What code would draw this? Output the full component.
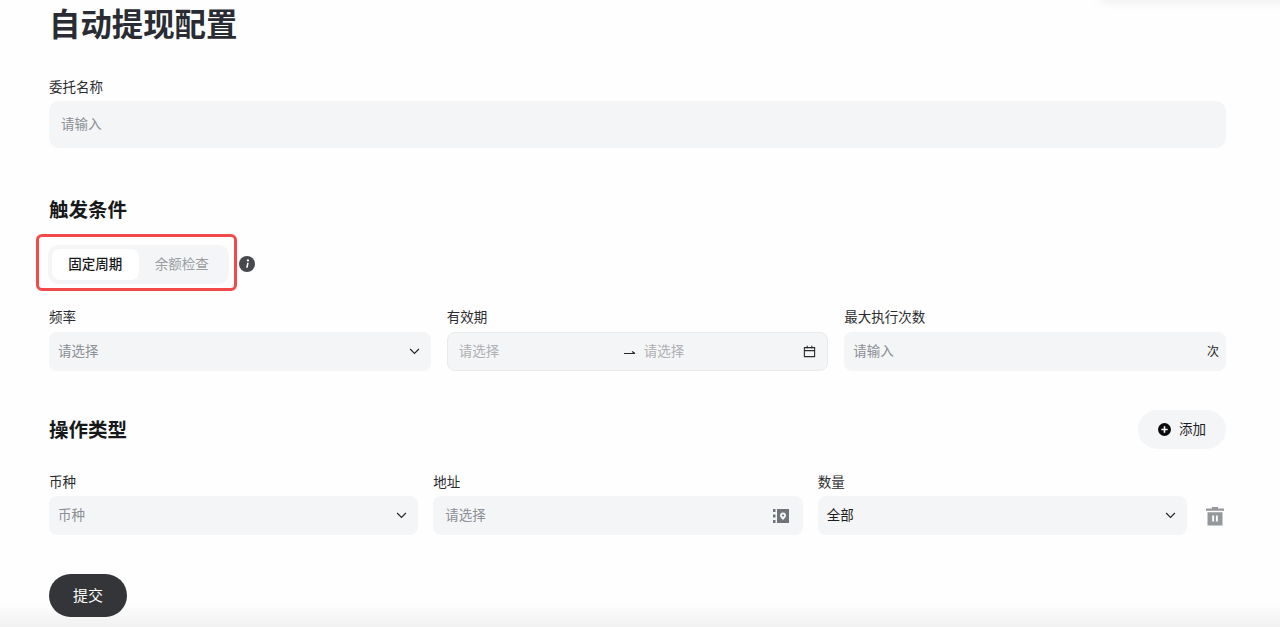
<script>
	let mode = 'fixed';
</script>

<div class="page">
	<div class="bottom-shade"></div>
	<div class="top-shade"></div>

	<h1>自动提现配置</h1>

	<div class="field name-field">
		<span class="label">委托名称</span>
		<div class="input tall"><span class="ph">请输入</span></div>
	</div>

	<h2 class="trigger-title">触发条件</h2>

	<div class="seg-row">
		<div class="highlight">
			<div class="seg">
				<button class:on={mode === 'fixed'} on:click={() => (mode = 'fixed')}>固定周期</button>
				<button class:on={mode === 'balance'} on:click={() => (mode = 'balance')}>余额检查</button>
			</div>
		</div>
		<svg class="info" viewBox="0 0 16 16" width="16" height="16">
			<circle cx="8" cy="8" r="8" fill="#46484c" />
			<circle cx="8.9" cy="4.4" r="1.15" fill="#fff" />
			<path d="M8.1 6.8h1.6l-1 5h-1.6z" fill="#fff" />
		</svg>
	</div>

	<div class="row three">
		<div class="field">
			<span class="label">频率</span>
			<div class="input">
				<span class="ph">请选择</span>
				<svg class="chev" viewBox="0 0 12 8" width="11" height="7"><path d="M1 1.2l5 5 5-5" /></svg>
			</div>
		</div>
		<div class="field">
			<span class="label">有效期</span>
			<div class="input range">
				<span class="ph light">请选择</span>
				<svg class="arrow" viewBox="0 0 13 7" width="13" height="7"><path d="M1 5.5h11M9 3.4l3 2.1" /></svg>
				<span class="ph light">请选择</span>
				<svg class="cal" viewBox="0 0 14 14" width="13" height="13">
					<path d="M1.5 2.8h11v9.7h-11zM1.5 6h11M4.5 .8v3M9.5 .8v3" />
				</svg>
			</div>
		</div>
		<div class="field">
			<span class="label">最大执行次数</span>
			<div class="input">
				<span class="ph">请输入</span>
				<span class="unit">次</span>
			</div>
		</div>
	</div>

	<div class="op-head">
		<h2>操作类型</h2>
		<button class="add">
			<svg viewBox="0 0 14 14" width="13" height="13">
				<circle cx="7" cy="7" r="7" fill="#0c0c0c" />
				<path d="M7 3.6v6.8M3.6 7h6.8" stroke="#fff" stroke-width="1.7" />
			</svg>
			<span>添加</span>
		</button>
	</div>

	<div class="op-row">
		<div class="field">
			<span class="label">币种</span>
			<div class="input">
				<span class="ph">币种</span>
				<svg class="chev" viewBox="0 0 12 8" width="11" height="7"><path d="M1 1.2l5 5 5-5" /></svg>
			</div>
		</div>
		<div class="field">
			<span class="label">地址</span>
			<div class="input addr">
				<span class="ph">请选择</span>
				<svg viewBox="0 0 16 16" width="16" height="16">
					<path d="M0 1h2.5v3H0zM0 6.5h2.5v3H0zM0 12h2.5v3H0z" fill="#70747a" />
					<path fill-rule="evenodd" d="M4 1h12v14H4zM10 4.5a3 3 0 0 0-3 3c0 1.8 3 4.5 3 4.5s3-2.7 3-4.5a3 3 0 0 0-3-3z" fill="#70747a" />
					<circle cx="10" cy="7.5" r="1.1" fill="#70747a" />
				</svg>
			</div>
		</div>
		<div class="field">
			<span class="label">数量</span>
			<div class="input">
				<span class="val">全部</span>
				<svg class="chev" viewBox="0 0 12 8" width="11" height="7"><path d="M1 1.2l5 5 5-5" /></svg>
			</div>
		</div>
		<svg class="trash" viewBox="0 0 20 20" width="20" height="20">
			<path d="M7 1h6v1.6h6v2.2H1V2.6h6z" fill="#94979b" />
			<path fill-rule="evenodd" d="M2.5 6.2h15V19.5h-15zM7.2 9.5v6h1.9v-6zM10.9 9.5v6h1.9v-6z" fill="#94979b" />
		</svg>
	</div>

	<button class="submit">提交</button>
</div>

<style>
	:global(body) {
		background: #fefefe;
	}

	.page {
		position: relative;
		isolation: isolate;
		height: 627px;
		overflow: hidden;
		box-sizing: border-box;
		padding: 0 54px 0 49px;
		font-family: 'Liberation Sans', 'Noto Sans CJK SC', sans-serif;
		color: #1c1d20;
	}

	h1 {
		margin: 0;
		padding-top: 4px;
		font-size: 31.4px;
		line-height: 44px;
		font-weight: 700;
		color: #2a2c33;
	}

	h2 {
		margin: 0;
		font-size: 19.5px;
		line-height: 28px;
		font-weight: 700;
		color: #17181a;
	}

	.field {
		display: flex;
		flex-direction: column;
		min-width: 0;
	}

	.label {
		font-size: 13.5px;
		line-height: 18px;
		color: #2b2c2f;
		margin-bottom: 4px;
	}

	.name-field {
		margin-top: 31px;
	}

	.input {
		height: 39px;
		box-sizing: border-box;
		display: flex;
		align-items: center;
		justify-content: space-between;
		padding: 0 9px;
		background: #f4f5f7;
		border-radius: 8px;
		font-size: 13.5px;
	}

	.input span {
		margin-bottom: 3px;
	}

	.input.tall {
		height: 47px;
		padding: 0 12px 0 13px;
		border-radius: 10px;
	}

	.input.tall .ph {
		margin-left: -1px;
	}

	.ph {
		color: #8c8f94;
	}

	.ph.light {
		color: #adb0b4;
	}

	.val {
		color: #1c1d20;
	}

	.unit {
		font-size: 12px;
		color: #1c1d20;
		margin-right: -2px;
	}

	.chev {
		fill: none;
		stroke: #26282b;
		stroke-width: 1.4;
		margin-right: 2px;
	}

	.trigger-title {
		margin-top: 48px;
	}

	.seg-row {
		display: flex;
		align-items: center;
		gap: 2px;
		margin-top: 10px;
		margin-left: -13px;
	}

	.highlight {
		box-sizing: border-box;
		width: 201px;
		height: 57px;
		border: 3px solid #f24a4a;
		border-radius: 6px;
		padding: 8px 5px 0 9px;
	}

	.seg {
		display: flex;
		height: 39px;
		box-sizing: border-box;
		padding: 4px;
		background: #f4f5f7;
		border-radius: 10px;
	}

	.seg button {
		width: 87px;
		border: 0;
		padding: 0 0 3px;
		background: transparent;
		border-radius: 8px;
		font: inherit;
		font-size: 13.5px;
		color: #9a9da1;
	}

	.seg button.on {
		background: #fff;
		color: #17181a;
		font-weight: 500;
	}

	.info {
		flex: none;
		margin-top: 3px;
	}

	.row.three {
		display: grid;
		grid-template-columns: repeat(3, 1fr);
		gap: 16px;
		margin-top: 18px;
	}

	.row.three .label {
		margin-bottom: 5px;
	}

	.range {
		display: grid;
		grid-template-columns: 156px 13px 1fr 13px;
		column-gap: 8px;
		padding: 0 11px;
		border: 1px solid #e9eaec;
		background: #f4f5f6;
	}

	.arrow {
		fill: none;
		stroke: #26282b;
		stroke-width: 1.2;
	}

	.cal {
		fill: none;
		stroke: #2a2c2f;
		stroke-width: 1.2;
	}

	.op-head {
		display: flex;
		align-items: center;
		justify-content: space-between;
		margin-top: 39px;
	}

	.add {
		display: flex;
		align-items: center;
		justify-content: center;
		gap: 8px;
		width: 88px;
		height: 39px;
		border: 0;
		border-radius: 20px;
		background: #f4f5f7;
		font: inherit;
		font-size: 13.5px;
		color: #1c1d20;
	}

	.add span {
		margin-bottom: 3px;
	}

	.op-row {
		display: grid;
		grid-template-columns: repeat(3, 1fr) 24px;
		gap: 15px;
		align-items: end;
		margin-top: 25px;
	}

	.addr {
		padding: 0 14px 0 12px;
	}

	.trash {
		margin: 0 1px 9px 3px;
	}

	.submit {
		display: block;
		margin-top: 39px;
		width: 78px;
		height: 43px;
		border: 0;
		padding: 0 0 3px;
		border-radius: 22px;
		background: #333538;
		color: #fff;
		font: inherit;
		font-size: 15px;
	}

	.top-shade {
		position: absolute;
		top: -8px;
		right: -10px;
		width: 190px;
		height: 8px;
		box-shadow: 0 0 12px rgba(0, 0, 0, 0.1);
	}

	.bottom-shade {
		position: absolute;
		z-index: -1;
		left: 0;
		right: 0;
		bottom: 0;
		height: 24px;
		background: linear-gradient(to bottom, rgba(240, 240, 240, 0), #f1f1f1);
	}
</style>
